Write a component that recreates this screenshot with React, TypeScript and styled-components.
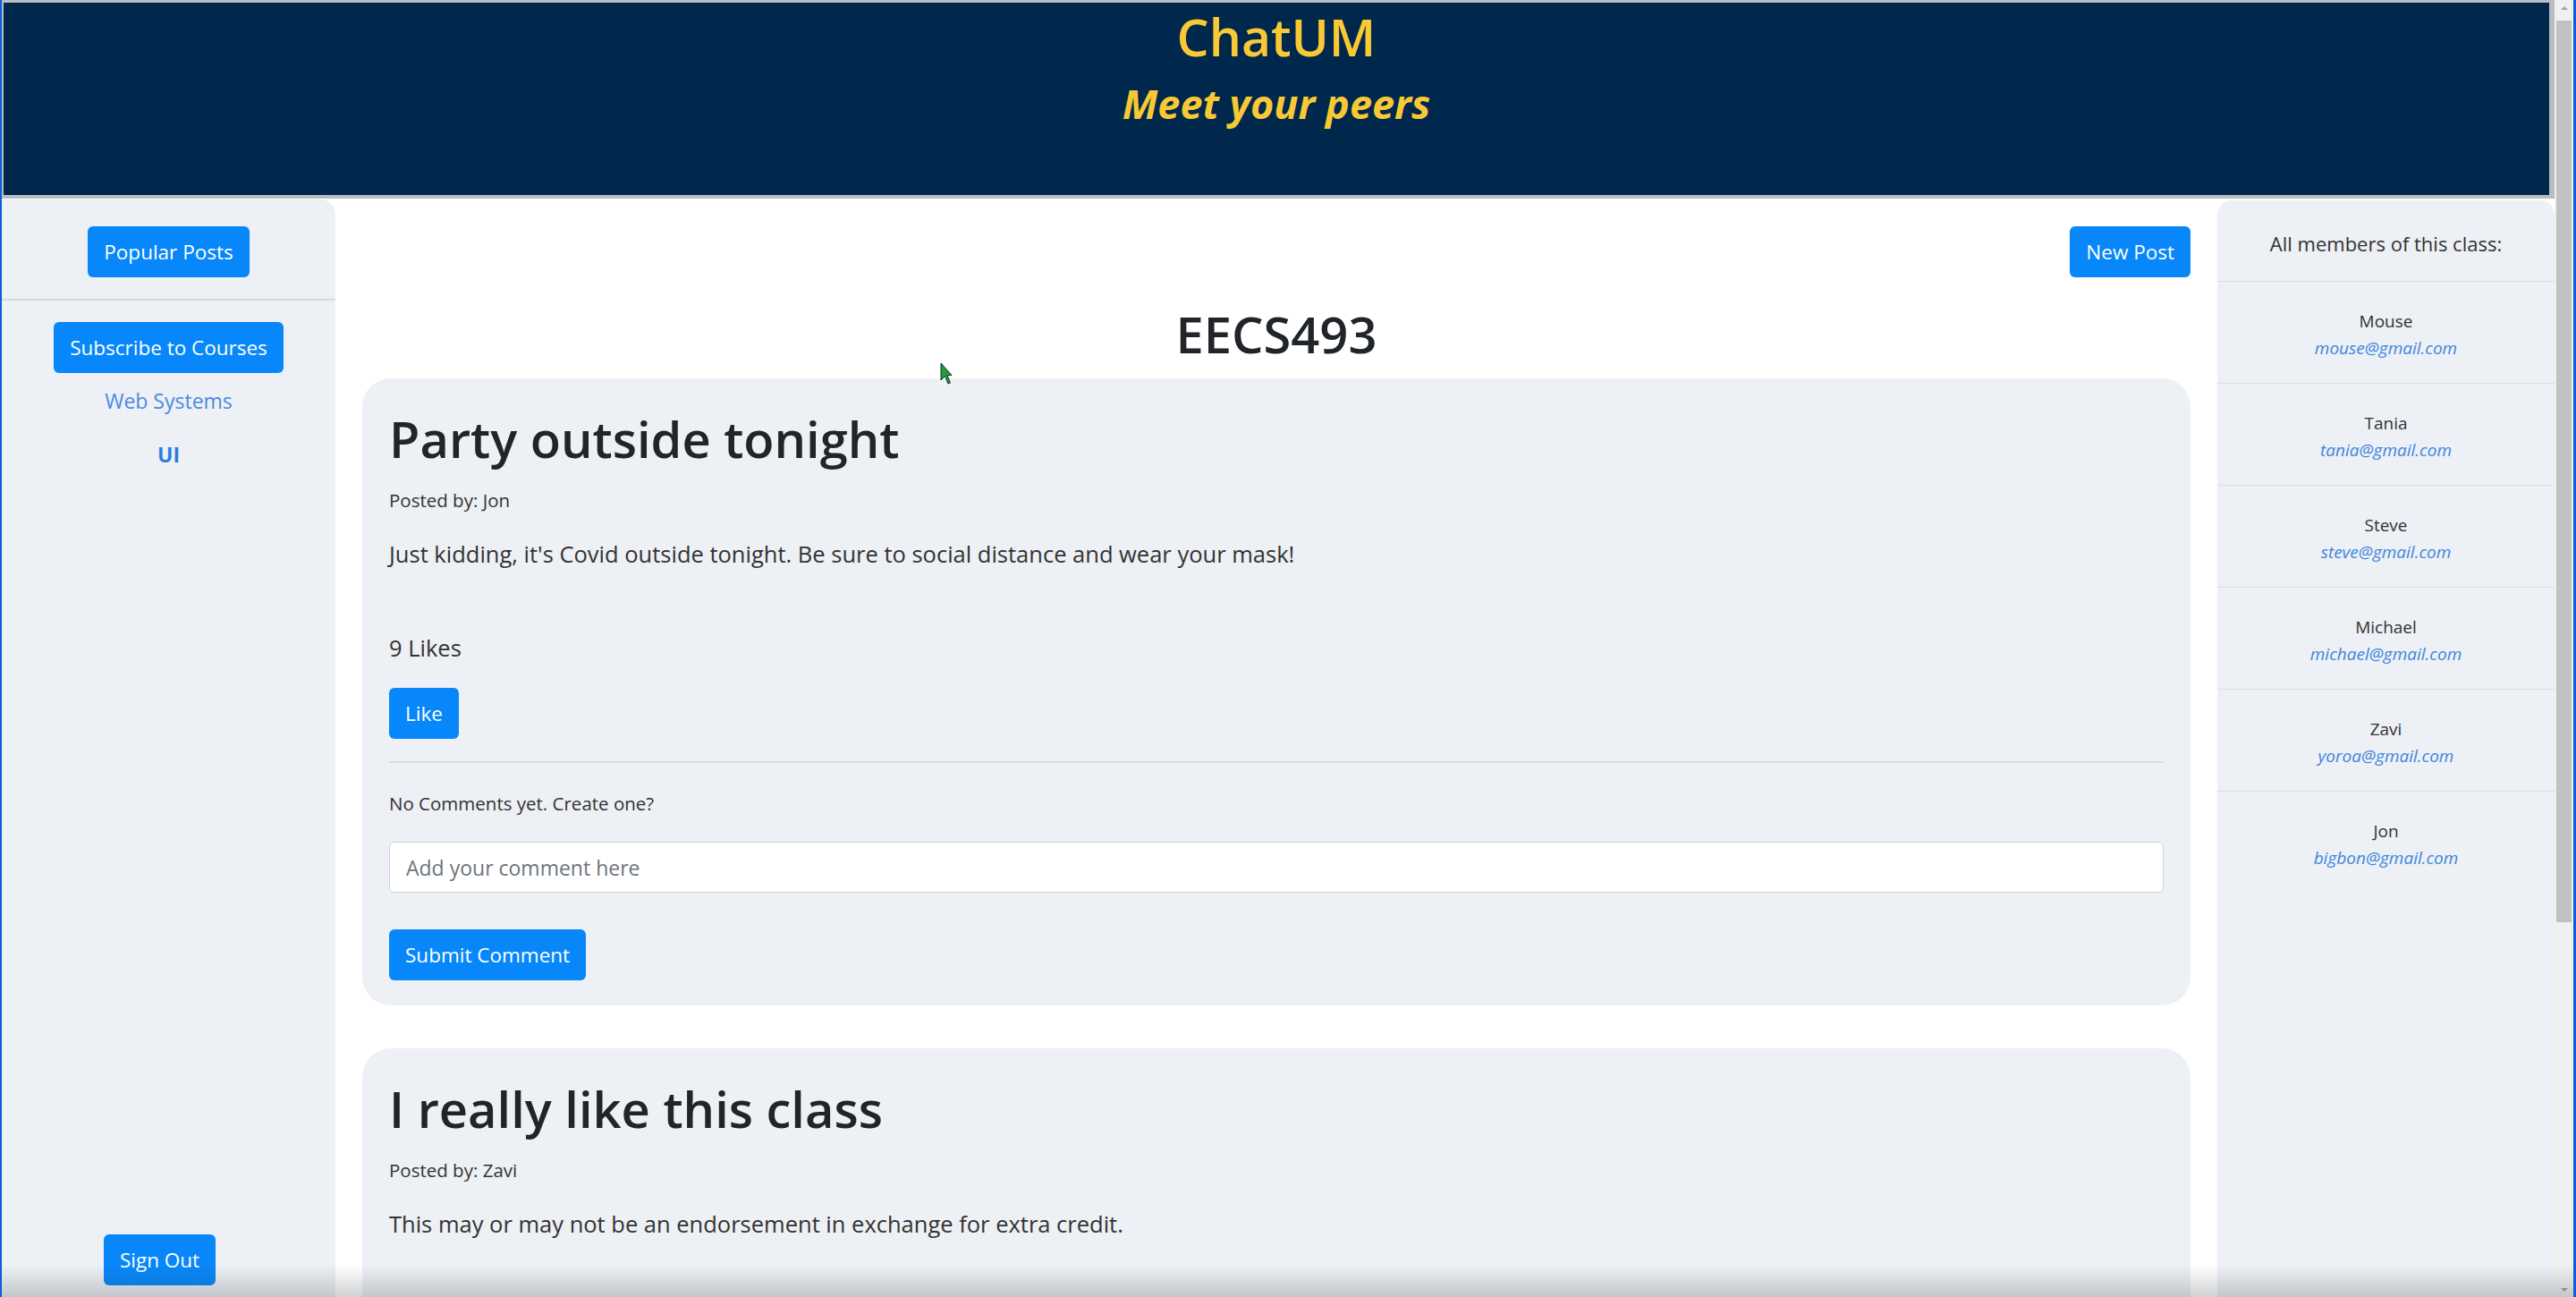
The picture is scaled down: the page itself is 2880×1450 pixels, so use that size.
import React from "react";
import styled, { createGlobalStyle } from "styled-components";

const GlobalStyle = createGlobalStyle`
  * {
    box-sizing: border-box;
  }
  body {
    margin: 0;
    background: #ffffff;
    font-family: "Segoe UI", "Open Sans", "Liberation Sans", sans-serif;
    color: #212529;
  }
`;

const Frame = styled.div`
  position: relative;
  display: flex;
  height: 100vh;
  overflow: hidden;
  border-left: 2px solid #0b5ed7;
  border-right: 3px solid #0b5ed7;
`;

const Viewport = styled.div`
  flex: 1;
  min-width: 0;
  display: flex;
  flex-direction: column;
`;

const Header = styled.header`
  height: 222px;
  flex-shrink: 0;
  background: #00274c;
  border-style: solid;
  border-color: #b9bdc1;
  border-width: 3px 6px 4px 2px;
  text-align: center;
  color: #f9c935;
  padding-top: 4px;
`;

const Brand = styled.h1`
  margin: 0;
  font-size: 57px;
  line-height: 68px;
  font-weight: 600;
`;

const Tagline = styled.h2`
  margin: 12px 0 0;
  font-size: 45px;
  line-height: 58px;
  font-weight: 700;
  font-style: italic;
`;

const Columns = styled.div`
  flex: 1;
  min-height: 0;
  display: flex;
`;

const Sidebar = styled.aside`
  width: 373px;
  flex-shrink: 0;
  margin-top: 1px;
  padding-top: 30px;
  background: #edf0f4;
  border-top-right-radius: 16px;
  display: flex;
  flex-direction: column;
  align-items: center;
`;

const SidebarDivider = styled.hr`
  align-self: stretch;
  margin: 24px 0 24px;
  border: 0;
  border-top: 2px solid #d6d9dd;
`;

const CourseLink = styled.a<{ active?: boolean }>`
  display: block;
  font-size: 23px;
  line-height: 36px;
  color: ${p => (p.active ? "#2b7be0" : "#4a8ae0")};
  font-weight: ${p => (p.active ? 700 : 400)};
  text-decoration: none;
  margin-top: ${p => (p.active ? "24px" : "13px")};
`;

const SignOutRow = styled.div`
  margin-top: auto;
  margin-bottom: 13px;
  padding-right: 20px;
`;

const Button = styled.button`
  height: 57px;
  padding: 0 18px;
  border: 0;
  border-radius: 6px;
  background: #0787fa;
  color: #ffffff;
  font-family: inherit;
  font-size: 22.5px;
  line-height: 57px;
  white-space: nowrap;
  cursor: pointer;
`;

const Main = styled.main`
  flex: 1;
  min-width: 0;
  padding: 31px 30px 0;
  display: flex;
  flex-direction: column;
`;

const Toolbar = styled.div`
  display: flex;
  justify-content: flex-end;
`;

const ClassTitle = styled.h1`
  margin: 27px 0 14px;
  font-size: 56px;
  line-height: 72px;
  font-weight: 600;
  text-align: center;
`;

const PostCard = styled.article`
  flex-shrink: 0;
  background: #edf0f4;
  border-radius: 32px;
  padding: 34px 30px 28px;
  margin-bottom: 48px;
`;

const PostTitle = styled.h2`
  margin: 0;
  font-size: 56px;
  line-height: 67px;
  font-weight: 600;
`;

const Byline = styled.div`
  margin-top: 23px;
  font-size: 20.5px;
  line-height: 24px;
  color: #333;
`;

const PostBody = styled.p`
  margin: 34px 0 0;
  font-size: 25.5px;
  line-height: 29px;
  color: #333;
`;

const Likes = styled.div`
  margin-top: 76px;
  font-size: 25.5px;
  line-height: 29px;
  color: #333;
`;

const LikeRow = styled.div`
  margin-top: 30px;
`;

const CardDivider = styled.hr`
  margin: 25px 0 0;
  border: 0;
  border-top: 2px solid #d9dcdf;
`;

const NoComments = styled.div`
  margin-top: 33px;
  font-size: 20.5px;
  line-height: 24px;
  color: #333;
`;

const CommentInput = styled.input`
  display: block;
  width: 100%;
  height: 57px;
  margin-top: 31px;
  padding: 0 18px;
  border: 1.5px solid #ced4da;
  border-radius: 6px;
  background: #ffffff;
  font-family: inherit;
  font-size: 23px;
  color: #495057;
  &::placeholder {
    color: #6c757d;
  }
`;

const SubmitRow = styled.div`
  margin-top: 41px;
`;

const Members = styled.aside`
  width: 377px;
  flex-shrink: 0;
  margin-top: 2px;
  background: #edf0f4;
  border-radius: 16px 16px 0 0;
`;

const MembersHeader = styled.div`
  padding: 35px 0 29px;
  text-align: center;
  font-size: 22px;
  line-height: 26px;
  color: #333;
  border-bottom: 1.5px solid #dadde1;
`;

const MemberRow = styled.div`
  padding: 29px 0 24px;
  text-align: center;
  border-bottom: 1.5px solid #dadde1;
  &:last-child {
    border-bottom: 0;
  }
`;

const MemberName = styled.div`
  font-size: 19px;
  line-height: 30px;
  color: #333;
`;

const MemberEmail = styled.div`
  font-size: 19px;
  line-height: 30px;
  font-style: italic;
  color: #3d86de;
`;

const Scrollbar = styled.div`
  width: 21px;
  flex-shrink: 0;
  background: #f0f0f0;
  display: flex;
  flex-direction: column;
  align-items: center;
`;

const ScrollArrow = styled.div<{ down?: boolean }>`
  height: 17px;
  width: 100%;
  display: flex;
  align-items: center;
  justify-content: center;
  margin-top: ${p => (p.down ? "auto" : "0")};
  &::before {
    content: "";
    border-left: 4px solid transparent;
    border-right: 4px solid transparent;
    ${p => (p.down ? "border-top: 4px solid #a3a3a3;" : "border-bottom: 4px solid #a3a3a3;")}
  }
`;

const ScrollThumb = styled.div`
  margin-top: 6px;
  width: 17px;
  height: 1008px;
  background: #c1c1c1;
`;

const BottomFade = styled.div`
  position: absolute;
  left: 0;
  right: 0;
  bottom: 0;
  height: 36px;
  pointer-events: none;
  background: linear-gradient(to bottom, rgba(60, 65, 70, 0), rgba(60, 65, 70, 0.24));
`;

const Cursor = styled.svg`
  position: absolute;
  left: 1049px;
  top: 405px;
  pointer-events: none;
`;

type Post = {
  title: string;
  author: string;
  body: string;
  likes: number;
};

const POSTS: Post[] = [
  {
    title: "Party outside tonight",
    author: "Jon",
    body: "Just kidding, it's Covid outside tonight. Be sure to social distance and wear your mask!",
    likes: 9,
  },
  {
    title: "I really like this class",
    author: "Zavi",
    body: "This may or may not be an endorsement in exchange for extra credit.",
    likes: 4,
  },
];

const MEMBERS = [
  { name: "Mouse", email: "mouse@gmail.com" },
  { name: "Tania", email: "tania@gmail.com" },
  { name: "Steve", email: "steve@gmail.com" },
  { name: "Michael", email: "michael@gmail.com" },
  { name: "Zavi", email: "yoroa@gmail.com" },
  { name: "Jon", email: "bigbon@gmail.com" },
];

const PostItem: React.FC<{ post: Post }> = ({ post }) => (
  <PostCard>
    <PostTitle>{post.title}</PostTitle>
    <Byline>Posted by: {post.author}</Byline>
    <PostBody>{post.body}</PostBody>
    <Likes>{post.likes} Likes</Likes>
    <LikeRow>
      <Button>Like</Button>
    </LikeRow>
    <CardDivider />
    <NoComments>No Comments yet. Create one?</NoComments>
    <CommentInput placeholder="Add your comment here" />
    <SubmitRow>
      <Button>Submit Comment</Button>
    </SubmitRow>
  </PostCard>
);

const App: React.FC = () => {
  return (
    <>
      <GlobalStyle />
      <Frame>
        <Viewport>
          <Header>
            <Brand>ChatUM</Brand>
            <Tagline>Meet your peers</Tagline>
          </Header>
          <Columns>
            <Sidebar>
              <Button>Popular Posts</Button>
              <SidebarDivider />
              <Button>Subscribe to Courses</Button>
              <CourseLink href="#">Web Systems</CourseLink>
              <CourseLink href="#" active>UI</CourseLink>
              <SignOutRow>
                <Button>Sign Out</Button>
              </SignOutRow>
            </Sidebar>
            <Main>
              <Toolbar>
                <Button>New Post</Button>
              </Toolbar>
              <ClassTitle>EECS493</ClassTitle>
              {POSTS.map(post => (
                <PostItem key={post.title} post={post} />
              ))}
            </Main>
            <Members>
              <MembersHeader>All members of this class:</MembersHeader>
              {MEMBERS.map(m => (
                <MemberRow key={m.email}>
                  <MemberName>{m.name}</MemberName>
                  <MemberEmail>{m.email}</MemberEmail>
                </MemberRow>
              ))}
            </Members>
          </Columns>
        </Viewport>
        <Scrollbar>
          <ScrollArrow />
          <ScrollThumb />
          <ScrollArrow down />
        </Scrollbar>
        <BottomFade />
        <Cursor width="14" height="26" viewBox="0 0 14 26">
          <path d="M1 1 L1 20 L5.5 15.5 L9 24 L11.5 23 L8 14.5 L13 14.5 Z" fill="#1f9a45" stroke="#0b3d1c" strokeWidth="1" />
        </Cursor>
      </Frame>
    </>
  );
};

export default App;
